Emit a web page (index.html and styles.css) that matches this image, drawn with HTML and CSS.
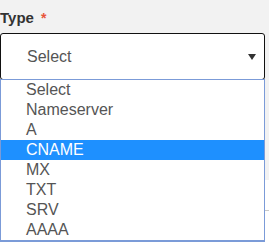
FILE: index.html
```html
<!DOCTYPE html>
<html lang="en">
<head>
  <meta charset="UTF-8" />
  <title>Type</title>
  <link rel="stylesheet" href="styles.css">
</head>
<body>
  <div class="form-group">
    <label class="field-label">Type <span class="required">*</span></label>
    <div class="select-wrap">
      <div class="select-box">
        <span>Select</span>
        <svg class="caret" width="8" height="6" viewBox="0 0 8 6"><path d="M0 0h8L4 6z" fill="#333"/></svg>
      </div>
      <ul class="option-list">
        <li>Select</li>
        <li>Nameserver</li>
        <li>A</li>
        <li class="active">CNAME</li>
        <li>MX</li>
        <li>TXT</li>
        <li>SRV</li>
        <li>AAAA</li>
      </ul>
    </div>
  </div>
  <div class="panel">
    <div class="panel-row"></div>
  </div>
</body>
</html>
```
FILE: styles.css
```css
body {
  margin: 0;
  background-color: #f2f2f2;
  font-family: 'Liberation Sans', Arial, sans-serif;
  width: 269px;
  height: 248px;
  overflow: hidden;
}
.form-group {
  padding-top: 8px;
}
.field-label {
  display: block;
  font-weight: bold;
  font-size: 15px;
  color: #333;
  height: 25px;
  line-height: 19px;
}
.required {
  color: #e8553a;
  font-size: 14px;
  margin-left: 3px;
}
.select-wrap {
  position: relative;
  width: 265px;
}
.select-box {
  box-sizing: border-box;
  height: 47px;
  border: 1px solid #111;
  border-radius: 3px;
  background-color: #fff;
  display: flex;
  align-items: center;
  justify-content: space-between;
  padding: 0 8px 0 26px;
  font-size: 16px;
  color: #555;
}
.caret {
  margin-top: 1px;
}
.option-list {
  position: absolute;
  top: 46px;
  left: 0;
  width: 265px;
  box-sizing: border-box;
  margin: 0;
  padding: 0;
  list-style: none;
  background-color: #fff;
  border: 1px solid #7b9bd8;
  border-bottom-width: 2px;
  z-index: 2;
}
.option-list li {
  height: 20px;
  line-height: 20px;
  padding-left: 25px;
  font-size: 16px;
  color: #555;
}
.option-list li.active {
  background-color: #1e90ff;
  color: #fff;
}
.panel {
  margin-top: 100px;
  background-color: #fff;
  height: 68px;
}
.panel-row {
  height: 30px;
  border-bottom: 1px solid #c8c8c8;
}
```
